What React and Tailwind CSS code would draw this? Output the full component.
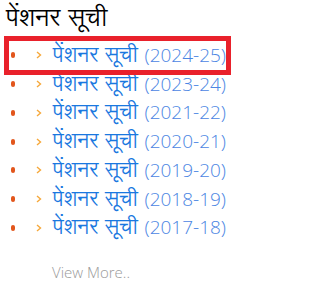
const years = ["2024-25", "2023-24", "2021-22", "2020-21", "2019-20", "2018-19", "2017-18"];

function Chevron() {
  return (
    <svg width="6" height="8" viewBox="0 0 6 8" className="shrink-0">
      <path d="M1 1l3.5 3L1 7" fill="none" stroke="#f6a83a" strokeWidth="1.4" />
    </svg>
  );
}

export default function App() {
  return (
    <div className="w-[238px] h-[291px] bg-white overflow-hidden font-['Lohit_Devanagari','Noto_Sans_Devanagari','Noto_Sans',sans-serif]">
      <h2 className="pl-[6px] h-[38px] text-[25px] leading-[38px] text-black font-normal">
        पेंशनर सूची
      </h2>

      <ul className="mt-[4px]">
        {years.map((y, i) => (
          <li
            key={y}
            className={`flex items-center h-[28.75px] ml-[9px] mr-[12px] ${
              i === 0 ? "outline-[5px] outline-solid outline-[#e9212b] -mt-[1px]" : ""
            }`}
          >
            <span className="ml-[2px] w-[6px] h-[6px] rounded-full bg-[#e2561c]" />
            <span className="ml-[21px] flex">
              <Chevron />
            </span>
            <a href="#" className="ml-[11px] text-[21px] leading-[28px] whitespace-nowrap text-[#1a78e0]">
              पेंशनर सूची{" "}
              <span className="font-['Open_Sans',sans-serif] font-light text-[19px] text-[#4c86e3]">({y})</span>
            </a>
          </li>
        ))}
      </ul>

      <div className="pl-[52px] mt-[19px] text-[15px] font-['Open_Sans',sans-serif] font-light text-[#9a9a9a]">
        View More..
      </div>
    </div>
  );
}
